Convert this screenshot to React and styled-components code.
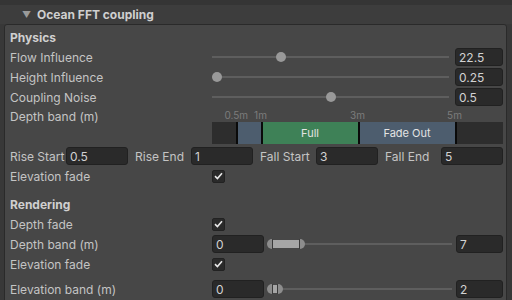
import React from "react";
import styled, { createGlobalStyle } from "styled-components";

const GlobalStyle = createGlobalStyle`
  html, body {
    margin: 0;
    padding: 0;
    background: #383838;
    overflow: hidden;
  }
  body {
    font-family: Inter, "Noto Sans", sans-serif;
    font-size: 12px;
    color: #c8c8c8;
  }
`;

const BAND_MAX = 6;
const bandSegments = [
  { from: 0, to: 0.5, kind: "empty" },
  { from: 0.5, to: 1, kind: "rise" },
  { from: 1, to: 3, kind: "full", text: "Full" },
  { from: 3, to: 5, kind: "rise", text: "Fade Out" },
  { from: 5, to: 6, kind: "empty" },
];
const bandTicks = [
  { at: 0.5, text: "0.5m" },
  { at: 1, text: "1m" },
  { at: 3, text: "3m" },
  { at: 5, text: "5m" },
];

const App = () => {
  return (
    <>
      <GlobalStyle />
      <Window>
        <TopStrip />
        <Header>
          <Arrow>▼</Arrow>
          <HeaderTitle>Ocean FFT coupling</HeaderTitle>
        </Header>
        <Panel>
          <SectionTitle>Physics</SectionTitle>
          <SliderRow label="Flow Influence" t={0.28} value="22.5" />
          <SliderRow label="Height Influence" t={0} value="0.25" />
          <SliderRow label="Coupling Noise" t={0.5} value="0.5" />

          <BandRow>
            <Label>Depth band (m)</Label>
            <BandControl>
              <Ticks>
                {bandTicks.map((tk) => (
                  <Tick key={tk.text} style={{ left: `${(tk.at / BAND_MAX) * 100}%` }}>
                    {tk.text}
                  </Tick>
                ))}
              </Ticks>
              <Band>
                {bandSegments.map((s, i) => (
                  <Segment
                    key={i}
                    $kind={s.kind}
                    $edge={i > 0}
                    style={{ width: `${((s.to - s.from) / BAND_MAX) * 100}%` }}
                  >
                    {s.text}
                  </Segment>
                ))}
              </Band>
            </BandControl>
          </BandRow>

          <PairRow>
            <Pair>
              <PairLabel>Rise Start</PairLabel>
              <Field>0.5</Field>
            </Pair>
            <Pair>
              <PairLabel>Rise End</PairLabel>
              <Field>1</Field>
            </Pair>
            <Pair>
              <PairLabel>Fall Start</PairLabel>
              <Field>3</Field>
            </Pair>
            <Pair>
              <PairLabel>Fall End</PairLabel>
              <Field>5</Field>
            </Pair>
          </PairRow>

          <Row>
            <Label>Elevation fade</Label>
            <Check />
          </Row>

          <SectionTitle $gap>Rendering</SectionTitle>
          <Row>
            <Label>Depth fade</Label>
            <Check />
          </Row>
          <RangeRow label="Depth band (m)" min="0" max="7" thumb={38} />
          <Row>
            <Label>Elevation fade</Label>
            <Check />
          </Row>
          <RangeRow label="Elevation band (m)" min="0" max="2" thumb={16} $gap />
        </Panel>
      </Window>
    </>
  );
};

const SliderRow = ({ label, t, value }) => (
  <Row>
    <Label>{label}</Label>
    <Controls>
      <Track>
        <Knob style={{ left: `calc(${t} * (100% - 10px))` }} />
      </Track>
      <NumField>{value}</NumField>
    </Controls>
  </Row>
);

const RangeRow = ({ label, min, max, thumb, $gap }) => (
  <Row $gap={$gap}>
    <Label>{label}</Label>
    <RangeControls>
      <MinField>{min}</MinField>
      <Track>
        <RangeThumb style={{ width: thumb }}>
          <Cap $side="left" />
          <ThumbBody />
          <Cap $side="right" />
        </RangeThumb>
      </Track>
      <NumField>{max}</NumField>
    </RangeControls>
  </Row>
);

const Check = () => (
  <CheckBox>
    <svg width="9" height="8" viewBox="0 0 9 8">
      <path d="M1 4.2 L3.4 6.5 L8 1.2" fill="none" stroke="#e8e8e8" strokeWidth="1.6" />
    </svg>
  </CheckBox>
);

export default App;

const Window = styled.div`
  width: 512px;
  height: 300px;
  overflow: hidden;
  background: #383838;
`;

const TopStrip = styled.div`
  height: 5px;
  background: #353535;
`;

const Header = styled.div`
  height: 19px;
  display: flex;
  align-items: center;
  background: #3d3d3d;
  padding-left: 22px;
`;

const Arrow = styled.span`
  font-size: 9px;
  color: #9a9a9a;
  width: 15px;
`;

const HeaderTitle = styled.span`
  font-weight: 700;
  color: #cfcfcf;
  font-size: 12px;
`;

const Panel = styled.div`
  margin-left: 4px;
  width: 493px;
  height: 290px;
  border: 1px solid #2a2a2a;
  border-radius: 3px;
  background: #474747;
  padding: 2px 3px 0 5px;
`;

const Row = styled.div`
  display: grid;
  grid-template-columns: 202px 1fr;
  align-items: center;
  height: 20px;
  margin-top: ${(p) => (p.$gap ? "5px" : "0")};
`;

const SectionTitle = styled.div`
  height: 20px;
  display: flex;
  align-items: center;
  font-weight: 700;
  color: #d0d0d0;
  margin-top: ${(p) => (p.$gap ? "8px" : "0")};
`;

const Label = styled.div`
  color: #c4c4c4;
  white-space: nowrap;
`;

const Controls = styled.div`
  display: grid;
  grid-template-columns: 1fr 48px;
  gap: 6px;
  align-items: center;
`;

const RangeControls = styled.div`
  display: grid;
  grid-template-columns: 52px 1fr 48px;
  gap: 3px;
  align-items: center;
  & > :last-child {
    margin-left: 1px;
  }
`;

const Track = styled.div`
  position: relative;
  height: 2px;
  background: #5e5e5e;
`;

const Knob = styled.div`
  position: absolute;
  top: -4px;
  width: 10px;
  height: 10px;
  border-radius: 50%;
  background: #999999;
`;

const Field = styled.div`
  height: 18px;
  box-sizing: border-box;
  background: #2a2a2a;
  border: 1px solid #212121;
  border-radius: 3px;
  padding-left: 3px;
  display: flex;
  align-items: center;
  color: #d2d2d2;
`;

const NumField = styled(Field)``;

const MinField = styled(Field)``;

const RangeThumb = styled.div`
  position: absolute;
  left: 0;
  top: -4px;
  height: 10px;
  display: flex;
`;

const Cap = styled.div`
  width: 6px;
  height: 10px;
  background: #8d8d8d;
  border-radius: ${(p) => (p.$side === "left" ? "5px 0 0 5px" : "0 5px 5px 0")};
  border-${(p) => (p.$side === "left" ? "right" : "left")}: 1px solid #3a3a3a;
  box-sizing: border-box;
`;

const ThumbBody = styled.div`
  flex: 1;
  height: 8px;
  margin-top: 1px;
  background: #a6a6a6;
`;

const BandRow = styled.div`
  display: grid;
  grid-template-columns: 202px 1fr;
  height: 38px;
  & > ${Label} {
    line-height: 20px;
  }
`;

const BandControl = styled.div`
  display: flex;
  flex-direction: column;
`;

const Ticks = styled.div`
  position: relative;
  height: 15px;
`;

const Tick = styled.span`
  position: absolute;
  top: 3px;
  transform: translateX(-50%);
  font-size: 10px;
  color: #7c7c7c;
  line-height: 10px;
`;

const segmentColors = {
  empty: "#2d2d2d",
  rise: "#4d5d6e",
  full: "#3e8157",
};

const Band = styled.div`
  display: flex;
  height: 22px;
`;

const Segment = styled.div`
  box-sizing: border-box;
  background: ${(p) => segmentColors[p.$kind]};
  border-left: ${(p) => (p.$edge ? "2px solid #0a0a0a" : "none")};
  display: flex;
  align-items: center;
  justify-content: center;
  color: #e4e4e4;
  font-size: 11px;
`;

const PairRow = styled.div`
  display: grid;
  grid-template-columns: repeat(4, 1fr);
  gap: 7px;
  height: 20px;
  align-items: center;
  margin-top: 1px;
`;

const Pair = styled.div`
  display: grid;
  grid-template-columns: 1fr 62px;
  align-items: center;
`;

const PairLabel = styled.div`
  color: #c4c4c4;
  white-space: nowrap;
`;

const CheckBox = styled.div`
  width: 13px;
  height: 13px;
  box-sizing: border-box;
  background: #2a2a2a;
  border: 1px solid #222222;
  border-radius: 2px;
  display: flex;
  align-items: center;
  justify-content: center;
`;
